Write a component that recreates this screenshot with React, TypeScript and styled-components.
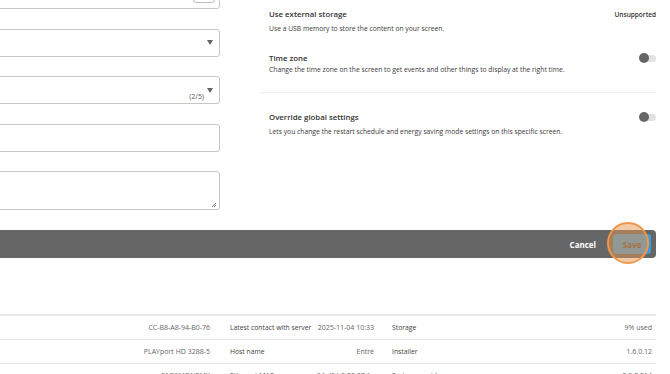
import React from "react";
import styled, { createGlobalStyle } from "styled-components";

const Global = createGlobalStyle`
  html, body { margin: 0; padding: 0; background: #fff; overflow: hidden; }
  body { font-family: "Open Sans", "Noto Sans", sans-serif; color: #333; }
  * { box-sizing: border-box; }
`;

const Page = styled.div`
  width: 656px;
  display: flex;
  flex-direction: column;
`;

const FormArea = styled.div`
  display: grid;
  grid-template-columns: 220px 1fr;
  column-gap: 49px;
  height: 230px;
  overflow: hidden;
`;

const LeftCol = styled.div`
  display: flex;
  flex-direction: column;
  gap: 19.5px;
  margin-top: -19px;
`;

const Field = styled.div<{ $h?: number; $align?: string; $pr?: number }>`
  height: ${(p) => p.$h ?? 28}px;
  margin-left: -12px;
  border: 1px solid #c6c6c6;
  border-radius: 3px;
  background: #fff;
  display: flex;
  align-items: ${(p) => p.$align ?? "center"};
  justify-content: flex-end;
  padding-right: ${(p) => p.$pr ?? 6}px;
  padding-bottom: ${(p) => (p.$align === "flex-end" ? 2 : 0)}px;
`;

const InnerButton = styled.div`
  width: 22px;
  height: 16px;
  border: 1px solid #bdbdbd;
  border-radius: 3px;
`;

const Arrow = styled.span`
  width: 0;
  height: 0;
  border-left: 3.5px solid transparent;
  border-right: 3.5px solid transparent;
  border-top: 5px solid #666;
`;

const Counter = styled.span`
  align-self: flex-end;
  margin: 0 3px 2px 0;
  font-size: 7px;
  line-height: 9px;
  color: #555;
`;

const RightCol = styled.div`
  display: flex;
  flex-direction: column;
  padding-top: 8px;
`;

const Setting = styled.div<{ $mt: number; $descGap: number }>`
  display: flex;
  flex-direction: column;
  margin-top: ${(p) => p.$mt}px;
  & > p {
    margin-top: ${(p) => p.$descGap}px;
  }
`;

const TitleRow = styled.div`
  display: flex;
  justify-content: space-between;
  align-items: center;
  height: 12px;
`;

const Title = styled.span`
  font-size: 7.8px;
  font-weight: 600;
  line-height: 12px;
  color: #333;
`;

const Status = styled.span`
  font-size: 6.5px;
  font-weight: 600;
  color: #333;
`;

const Desc = styled.p`
  margin: 0;
  font-size: 6.75px;
  line-height: 9px;
  color: #3a3a3a;
`;

const Toggle = styled.span`
  position: relative;
  width: 14px;
  height: 7px;
  margin-left: 3px;
  border-radius: 4px;
  background: #e2e2e2;
  &::before {
    content: "";
    position: absolute;
    left: -3px;
    top: -1.5px;
    width: 10px;
    height: 10px;
    border-radius: 50%;
    background: #666;
  }
`;

const Divider = styled.hr`
  margin: 18.5px 0 0 -9px;
  border: 0;
  height: 1px;
  background: #ececec;
`;

const ActionBar = styled.div`
  height: 28px;
  background: #666;
  border-radius: 0 4px 4px 0;
  display: flex;
  justify-content: flex-end;
  align-items: center;
  gap: 17px;
  padding-right: 5px;
`;

const Cancel = styled.span`
  font-size: 8px;
  font-weight: 700;
  color: #fff;
`;

const SaveButton = styled.span`
  position: relative;
  width: 38px;
  height: 20px;
  border-radius: 3px;
  background: #3d9ad6;
  display: flex;
  align-items: center;
  justify-content: center;
  font-size: 8px;
  font-weight: 700;
  color: #6a4a38;
`;

const Highlight = styled.span`
  position: absolute;
  left: -6px;
  top: -12px;
  width: 42px;
  height: 42px;
  border-radius: 50%;
  border: 2px solid #f0964a;
  background: rgba(232, 150, 80, 0.5);
  pointer-events: none;
`;

const Table = styled.div`
  margin-top: 56px;
  border-top: 2px solid #e8e8e8;
`;

const Row = styled.div`
  display: grid;
  grid-template-columns: 220px 92px 72px 136px 136px;
  height: 24px;
  border-bottom: 1px solid #e8e8e8;
  align-items: center;
  white-space: nowrap;
`;

const Value = styled.span<{ $pr?: number }>`
  text-align: right;
  padding-right: ${(p) => p.$pr ?? 10}px;
  font-size: 7px;
  color: #666;
`;

const Label = styled.span<{ $pl?: number }>`
  padding-left: ${(p) => p.$pl ?? 10}px;
  font-size: 6.8px;
  color: #444;
`;

const ResizeHandle = () => (
  <svg width="4" height="4" viewBox="0 0 4 4">
    <path d="M4 0 L0 4 M4 2 L2 4" stroke="#666" strokeWidth="0.9" />
  </svg>
);

const rows = [
  ["CC-B8-A8-94-B0-76", "Latest contact with server", "2025-11-04 10:33", "Storage", "9% used"],
  ["PLAYport HD 3288-5", "Host name", "Entré", "Installer", "1.6.0.12"],
  ["01Q9MQN2MK", "Ethernet MAC", "34:d0:b8:20:07:1c", "System provider", "2.8.0.214"],
];

export default function App() {
  return (
    <Page>
      <Global />
      <FormArea>
        <LeftCol>
          <Field $pr={4}>
            <InnerButton />
          </Field>
          <Field>
            <Arrow />
          </Field>
          <Field>
            <Counter>(2/5)</Counter>
            <Arrow />
          </Field>
          <Field />
          <Field $h={39} $align="flex-end" $pr={3}>
            <ResizeHandle />
          </Field>
        </LeftCol>
        <RightCol>
          <Setting $mt={0} $descGap={3.5}>
            <TitleRow>
              <Title>Use external storage</Title>
              <Status>Unsupported</Status>
            </TitleRow>
            <Desc>Use a USB memory to store the content on your screen.</Desc>
          </Setting>
          <Setting $mt={19.5} $descGap={0.5}>
            <TitleRow>
              <Title>Time zone</Title>
              <Toggle />
            </TitleRow>
            <Desc>
              Change the time zone on the screen to get events and other things to display at the right time.
            </Desc>
          </Setting>
          <Divider />
          <Setting $mt={18} $descGap={3.5}>
            <TitleRow>
              <Title>Override global settings</Title>
              <Toggle />
            </TitleRow>
            <Desc>Lets you change the restart schedule and energy saving mode settings on this specific screen.</Desc>
          </Setting>
        </RightCol>
      </FormArea>
      <ActionBar>
        <Cancel>Cancel</Cancel>
        <SaveButton>
          Save
          <Highlight />
        </SaveButton>
      </ActionBar>
      <Table>
        {rows.map((r) => (
          <Row key={r[1]}>
            <Value>{r[0]}</Value>
            <Label>{r[1]}</Label>
            <Value>{r[2]}</Value>
            <Label $pl={8}>{r[3]}</Label>
            <Value $pr={4}>{r[4]}</Value>
          </Row>
        ))}
      </Table>
    </Page>
  );
}
